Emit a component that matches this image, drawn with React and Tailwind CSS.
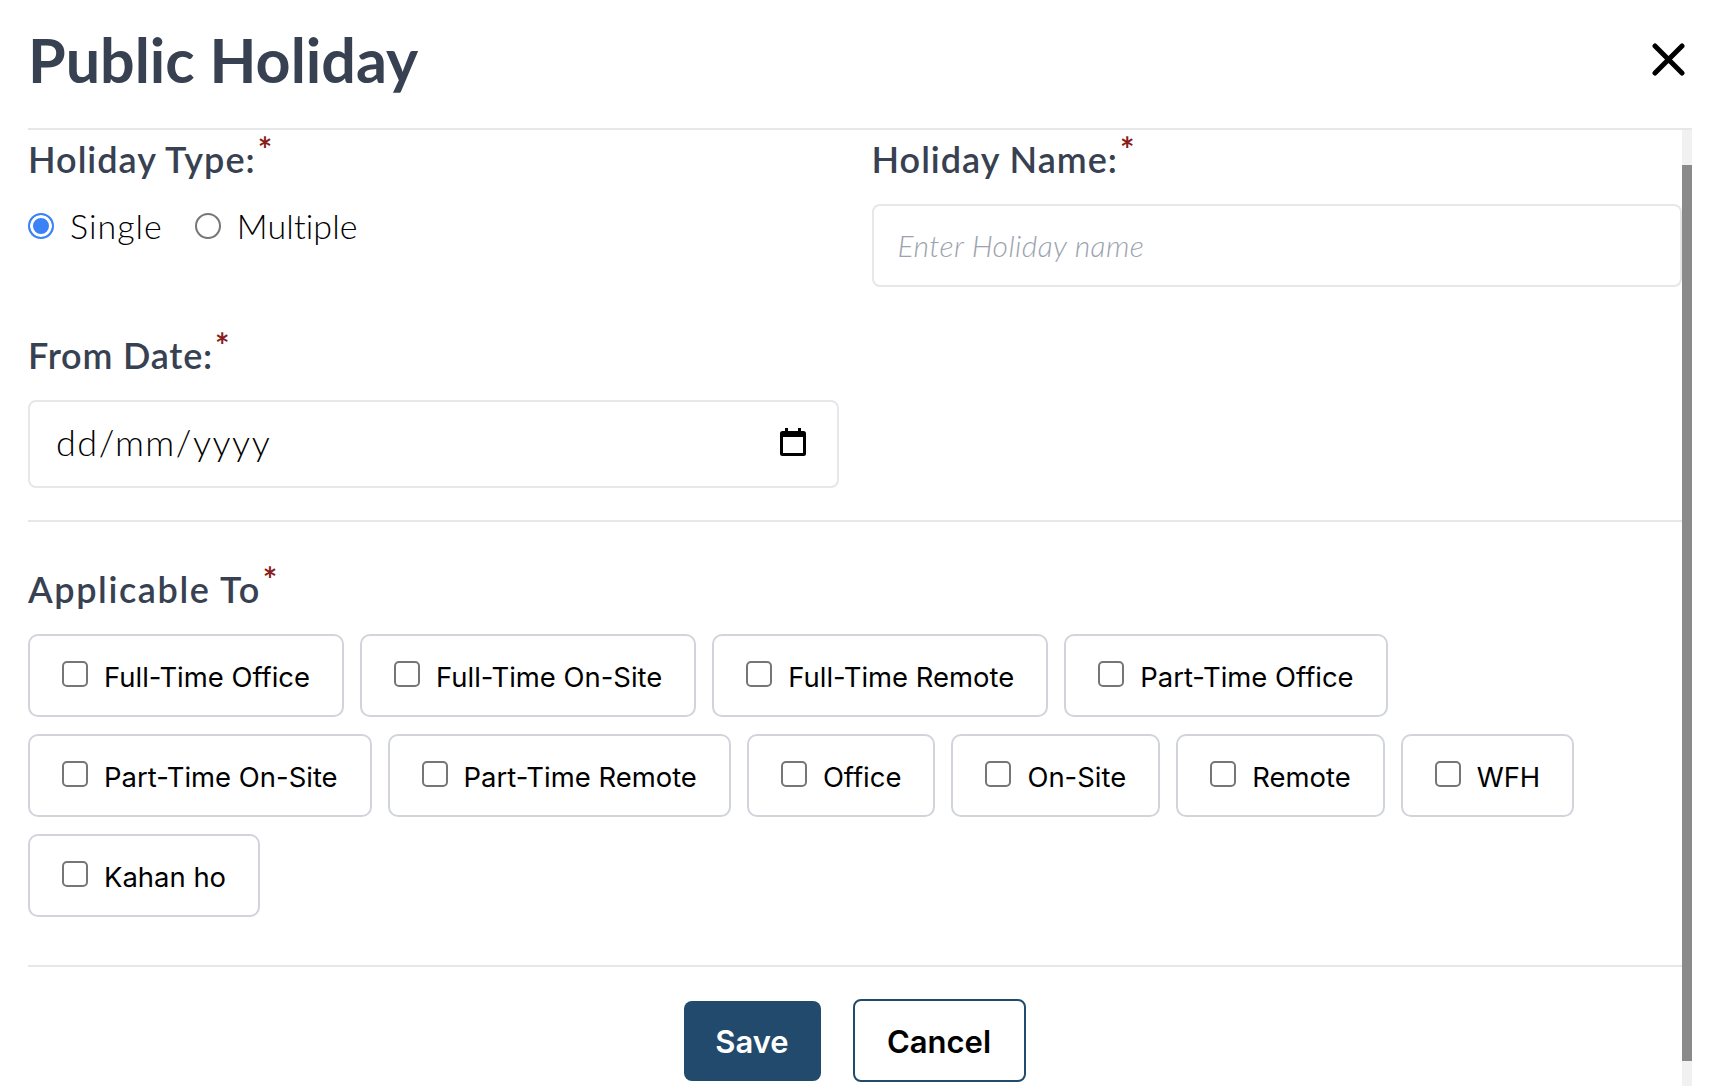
import React from 'react';

const ROWS = [
  ['Full-Time Office', 'Full-Time On-Site', 'Full-Time Remote', 'Part-Time Office'],
  ['Part-Time On-Site', 'Part-Time Remote', 'Office', 'On-Site', 'Remote', 'WFH'],
  ['Kahan ho'],
];

const FieldLabel = ({ children, spacing = 'tracking-[1px]' }) => (
  <div className={`h-[40px] font-[Lato,sans-serif] font-semibold text-[36px] leading-[40px] text-[#374151] whitespace-nowrap ${spacing}`}>
    {children}
    <span className="ml-[2px] font-bold text-[34px] leading-[0] align-[11px] text-[#8b1c1c]">*</span>
  </div>
);

const RadioOption = ({ label, checked, spacing }) => (
  <label className="flex items-center">
    <input
      type="radio"
      name="holidayType"
      defaultChecked={checked}
      className="appearance-none w-[26px] h-[26px] m-0 rounded-full border-2 border-[#767676] bg-white checked:border-[#3b82f6] checked:bg-[#3b82f6] checked:shadow-[inset_0_0_0_3px_white]"
    />
    <span className={`ml-[16px] pt-[1px] font-[Lato,sans-serif] font-light text-[34px] leading-[40px] text-black ${spacing}`}>{label}</span>
  </label>
);

const App = () => {
  return (
    <div className="h-[1086px] overflow-hidden bg-white pl-[28px] pr-[24px]">
      <div className="h-[130px] flex items-center justify-between border-b-2 border-[#e5e7eb] pb-[10px]">
        <h1 className="font-[Lato,sans-serif] font-bold text-[61px] leading-none text-[#374151]">Public Holiday</h1>
        <button className="mr-[7px]">
          <svg width="34" height="34" viewBox="0 0 34 34" fill="none" stroke="black" strokeWidth="5" strokeLinecap="round">
            <path d="M4 4L31 31M31 4L4 31" />
          </svg>
        </button>
      </div>

      <div className="flex">
        <div className="flex-1 min-w-0">
          <div className="grid grid-cols-2 gap-x-[33px] pt-[9px]">
            <div>
              <FieldLabel>Holiday Type:</FieldLabel>
              <div className="mt-[26px] flex items-center gap-[32px]">
                <RadioOption label="Single" checked spacing="tracking-[1px]" />
                <RadioOption label="Multiple" spacing="tracking-[0.1px]" />
              </div>
            </div>
            <div>
              <FieldLabel>Holiday Name:</FieldLabel>
              <input
                type="text"
                placeholder="Enter Holiday name"
                className="mt-[25px] block w-full h-[83px] pl-[24px] pr-[24px] pb-[2px] border-2 border-[#e5e7eb] rounded-[8px] font-[Lato,sans-serif] font-light text-[30px] tracking-[0.4px] placeholder:italic placeholder:text-[#9ca3af] outline-none"
              />
            </div>
            <div className="mt-[48px]">
              <FieldLabel spacing="tracking-[0.8px]">From Date:</FieldLabel>
              <div className="mt-[25px] h-[88px] flex items-center justify-between pl-[26px] pr-[31px] border-2 border-[#e5e7eb] rounded-[8px]">
                <span className="mb-[4px] font-[Lato,sans-serif] font-light text-[36px] tracking-[1.5px] text-black">dd/mm/yyyy</span>
                <svg className="mb-[4px]" width="26" height="28" viewBox="0 0 26 28" fill="black">
                  <path d="M5 0h3v3h10V0h3v3h2.500A2.500 2.500 0 0 1 26 5.500V25.500A2.500 2.500 0 0 1 23.500 28H2.500A2.500 2.500 0 0 1 0 25.500V5.500A2.500 2.500 0 0 1 2.500 3H5zM3 9v16h20V9z" />
                </svg>
              </div>
            </div>
          </div>

          <div className="mt-[32px] border-t-2 border-[#e5e7eb] pt-[47px]">
            <FieldLabel spacing="tracking-[1.6px]">Applicable To</FieldLabel>
            <div className="mt-[25px] flex flex-col gap-[17px]">
              {ROWS.map((row, i) => (
                <div key={i} className="flex gap-[16px]">
                  {row.map((name) => (
                    <label key={name} className="h-[83px] flex items-center px-[32px] border-2 border-[#d1d5db] rounded-[10px]">
                      <input
                        type="checkbox"
                        className="appearance-none w-[26px] h-[26px] m-0 mb-[4px] border-2 border-[#767676] rounded-[5px] bg-white"
                      />
                      <span className="ml-[16px] mt-[3px] font-[Inter,sans-serif] text-[27.45px] leading-[34px] text-black whitespace-nowrap">{name}</span>
                    </label>
                  ))}
                </div>
              ))}
            </div>
          </div>

          <div className="mt-[48px] border-t-2 border-[#e5e7eb] pt-[32px] pr-[1px] flex items-center justify-center gap-[32px] font-[Inter,sans-serif] font-semibold text-[31px]">
            <button className="w-[137px] h-[80px] pt-[3px] rounded-[8px] bg-[#224a6c] text-white">Save</button>
            <button className="w-[173px] h-[83px] pt-[3px] rounded-[8px] border-2 border-[#224a6c] bg-white text-black">Cancel</button>
          </div>
        </div>

        <div className="w-[10px] shrink-0 bg-[#f1f1f1] pt-[35px] h-[956px]">
          <div className="h-[896px] bg-[#8a8a8a]" />
        </div>
      </div>
    </div>
  );
};

export default App;
